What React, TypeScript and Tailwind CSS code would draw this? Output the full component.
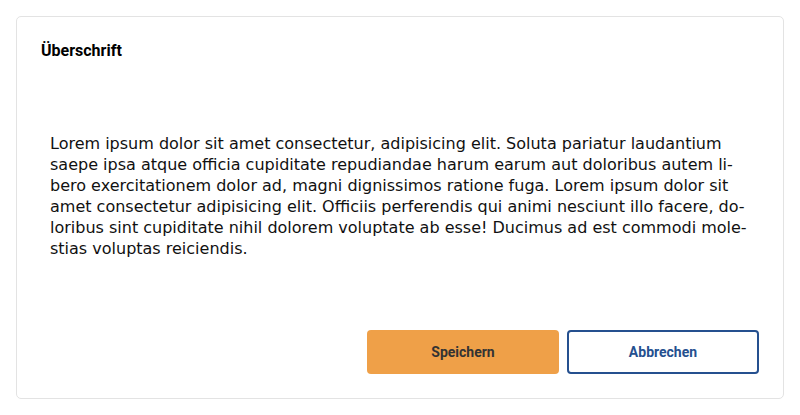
export default function App() {
  return (
    <div className="w-[800px] h-[415px] bg-white p-4">
      <div className="h-[383px] border border-[#e3e3e3] rounded-[5px] p-6 flex flex-col">
        <h2 className="text-[16px] leading-5 font-bold text-black" style={{ fontFamily: "Roboto, sans-serif" }}>
          Überschrift
        </h2>
        <p
          className="mt-[72px] pl-[9px] text-[16px] leading-[21px] text-[#111]"
          style={{ fontFamily: '"DejaVu Sans", Verdana, sans-serif' }}
        >
          Lorem ipsum dolor sit amet consectetur, adipisicing elit. Soluta pariatur laudantium
          <br />
          saepe ipsa atque officia cupiditate repudiandae harum earum aut doloribus autem li-
          <br />
          bero exercitationem dolor ad, magni dignissimos ratione fuga. Lorem ipsum dolor sit
          <br />
          amet consectetur adipisicing elit. Officiis perferendis qui animi nesciunt illo facere, do-
          <br />
          loribus sint cupiditate nihil dolorem voluptate ab esse! Ducimus ad est commodi mole-
          <br />
          stias voluptas reiciendis.
        </p>
        <div className="mt-auto flex justify-end gap-2" style={{ fontFamily: "Roboto, sans-serif" }}>
          <button className="w-[192px] h-[44px] rounded-[4px] bg-[#efa048] text-[14px] font-bold text-[#333]">
            Speichern
          </button>
          <button className="w-[192px] h-[44px] rounded-[4px] border-2 border-[#25508f] bg-white text-[14px] font-bold text-[#25508f]">
            Abbrechen
          </button>
        </div>
      </div>
    </div>
  );
}
